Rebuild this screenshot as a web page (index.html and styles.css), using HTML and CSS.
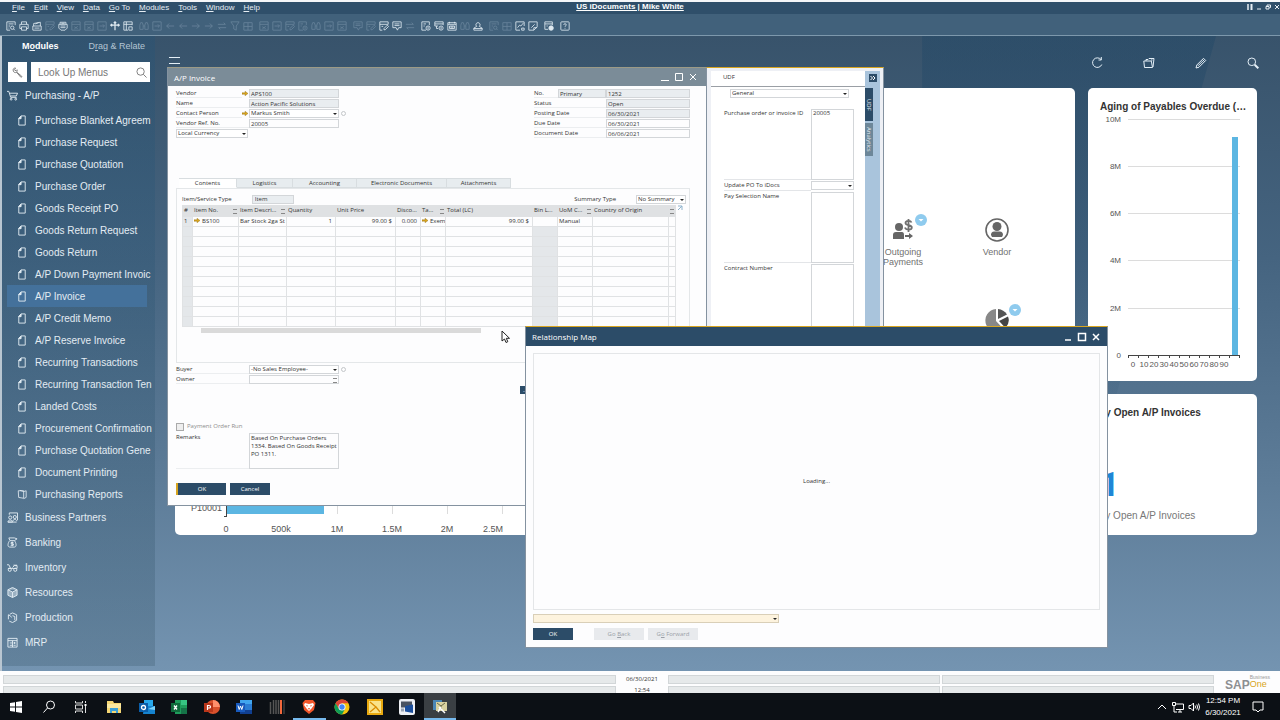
FILE: index.html
```html
<!DOCTYPE html>
<html lang="en">
<head>
  <meta charset="utf-8">
  <title>US iDocuments | Mike White</title>
  <link rel="stylesheet" href="styles.css">
</head>
<body>

<svg class="sprite" aria-hidden="true">
  <symbol id="i-preview" viewBox="0 0 12 12"><path d="M11 5V1H1v10h4M3 3.500h6M3 6h2M3 8.500h1M10.500 11L9 9.500"/><circle cx="7.500" cy="8" r="2"/></symbol>
  <symbol id="i-print" viewBox="0 0 12 12"><path d="M3 4V1h6v3M3 9H1V4h10v5H9M3 7h6v4H3z"/></symbol>
  <symbol id="i-printer2" viewBox="0 0 12 12"><path d="M2 6V3l8-1.500V6M1 6h10v5H1zM4 3.500L8 2M3 8.500h6"/></symbol>
  <symbol id="i-sheet" viewBox="0 0 12 12"><path d="M1 1h10v10H1zM1 4h10M4 7l4 2M8 6.500L4 9.500"/></symbol>
  <symbol id="i-arrowbox" viewBox="0 0 12 12"><path d="M1 1h10v10H1zM3 6h6M7 4l2 2-2 2"/></symbol>
  <symbol id="i-fax" viewBox="0 0 12 12"><path d="M2.500 4V1.500h7V4M1 4h10v4.500L8.500 11h-5L1 8.500zM3 6h6M3 8h6M4 2.800h4"/></symbol>
  <symbol id="i-move" viewBox="0 0 12 12"><path d="M6 1v10M1 5h10M4.500 2.500L6 1l1.500 1.500M2.500 3.500L1 5l1.500 1.500M9.500 3.500L11 5 9.500 6.500" stroke-width="1.500"/></symbol>
  <symbol id="i-layout" viewBox="0 0 12 12"><path d="M11 5V1H1v10h5M1 4h10M4 1v10M7 7h4v4H7z"/></symbol>
  <symbol id="i-find" viewBox="0 0 12 12"><path d="M1 10V5l1-3h2l1 3v5zM7 10V5l1-3h2l1 3v5zM5 6h2"/></symbol>
  <symbol id="i-left" viewBox="0 0 12 12"><path d="M11 6H2M5 3L2 6l3 3"/></symbol>
  <symbol id="i-right" viewBox="0 0 12 12"><path d="M1 6h9M7 3l3 3-3 3"/></symbol>
  <symbol id="i-swap" viewBox="0 0 12 12"><path d="M1 4h9M8 2l2 2M11 8H2M4 10L2 8"/></symbol>
  <symbol id="i-filter" viewBox="0 0 12 12"><path d="M1 1h10L7.500 6v5l-3-1.500V6z"/></symbol>
  <symbol id="i-grid" viewBox="0 0 12 12"><path d="M1 2h10v9H1zM6 2v9M1 6.500h10"/></symbol>
  <symbol id="i-edit" viewBox="0 0 12 12"><path d="M11 4V1H1v10h3M1 4h10M6 10.500V9l4-4 1.500 1.500-4 4zM3 6.500h2"/></symbol>
  <symbol id="i-chat" viewBox="0 0 12 12"><path d="M1 1h10v7H8l-1.500 3L5 8H1zM3 3.500h6M3 5.500h6"/></symbol>
  <symbol id="i-doccoin" viewBox="0 0 12 12"><path d="M6 11H1V1h9v4M3 3.500h3M3 6h1.500"/><circle cx="8.500" cy="8.500" r="2.500"/><path d="M8.500 7v3"/></symbol>
  <symbol id="i-alert" viewBox="0 0 12 12"><path d="M5 6H1V1h10v4M1 3.500h10M3 6v3h2"/><circle cx="8.500" cy="8.500" r="2.500"/><path d="M8.500 7v3"/></symbol>
  <symbol id="i-calendar" viewBox="0 0 12 12"><path d="M1 2h10v9H1zM1 4h10M3 1v2M9 1v2M3 6h6v3H3zM5 6v3M7 6v3"/></symbol>
  <symbol id="i-stamp" viewBox="0 0 12 12"><path d="M4.500 6.500a2.500 2.500 0 1 1 3 0L11 8.500V11H1V8.500zM1 9h10"/></symbol>
  <symbol id="i-chart" viewBox="0 0 12 12"><path d="M11 6V1H1v10h5M3 8l2.500-3L7 6l3-3.500M8 8.500h3v2.500H8z"/></symbol>
  <symbol id="i-note" viewBox="0 0 12 12"><path d="M1 1h10v6l-4 4H1zM7 11V8h4M4 8l4-4"/></symbol>
  <symbol id="i-web" viewBox="0 0 12 12"><path d="M5 10H1V1h9v4M1 3.500h9M3 6h1.500"/><circle cx="8.500" cy="8.500" r="2.700" fill="currentColor"/></symbol>
  <symbol id="i-help" viewBox="0 0 12 12"><rect x="1" y="1" width="10" height="10" rx="1"/><path d="M4.500 4.700c0-2 3-2 3 0C7.500 5.800 6 5.700 6 7M6 8.200v1"/></symbol>
  <symbol id="i-doc" viewBox="0 0 10 12"><path d="M1.500 3.500L4 1h4.500v10h-7z"/><path d="M1.500 4L4 1v3z" fill="currentColor"/></symbol>
  <symbol id="i-report" viewBox="0 0 12 12"><path d="M1.500 1.500H8v9L2 9.500zM3.500 1L8 2.500M8 2.500l3-1v8l-3 1.500"/></symbol>
  <symbol id="i-search" viewBox="0 0 12 12"><circle cx="5" cy="5" r="4"/><path d="M8 8l3.500 3.500"/></symbol>
  <symbol id="i-arrow" viewBox="0 0 8 6"><path d="M0 2h4V0l4 3-4 3V4H0z"/></symbol>
  <symbol id="i-badge" viewBox="0 0 12 12"><circle cx="6" cy="6" r="6" fill="#8fcbee"/><path d="M3.500 5h5L6 7.500z" fill="#fff"/></symbol>
</svg>

<div class="app">
  <header class="menubar">
    <nav class="menus">
      <a href="#"><u>F</u>ile</a>
      <a href="#"><u>E</u>dit</a>
      <a href="#"><u>V</u>iew</a>
      <a href="#"><u>D</u>ata</a>
      <a href="#"><u>G</u>o To</a>
      <a href="#"><u>M</u>odules</a>
      <a href="#"><u>T</u>ools</a>
      <a href="#"><u>W</u>indow</a>
      <a href="#"><u>H</u>elp</a>
    </nav>
    <h1>US iDocuments | Mike White</h1>
    <div class="app-controls">
      <button aria-label="Layout"><svg viewBox="0 0 6 6"><path d="M1 0v6M0 1h2M0 3h2M0 5h2M3 1h3M3 3h3M3 5h3M4.500 0v6"/></svg></button>
      <button aria-label="Minimize"><svg viewBox="0 0 6 6"><path d="M1 5h4"/></svg></button>
      <button aria-label="Restore"><svg viewBox="0 0 6 6"><path d="M2 2V1h3.500v2.500h-1M1 2.500h3v2.500H1z"/></svg></button>
      <button aria-label="Close"><svg viewBox="0 0 6 6"><path d="M1 1l4 4M5 1L1 5"/></svg></button>
    </div>
  </header>

  <div class="toolbar">
    <div class="tools">
      <button aria-label="Preview"><svg><use href="#i-preview"/></svg></button>
      <button aria-label="Print"><svg><use href="#i-print"/></svg></button>
      <button aria-label="Send"><svg><use href="#i-printer2"/></svg></button>
      <button aria-label="SMS" disabled><svg><use href="#i-edit"/></svg></button>
      <button aria-label="Fax"><svg><use href="#i-fax"/></svg></button>
      <button aria-label="Excel" disabled><svg><use href="#i-sheet"/></svg></button>
      <button aria-label="Word" disabled><svg><use href="#i-sheet"/></svg></button>
      <button aria-label="PDF" disabled><svg><use href="#i-arrowbox"/></svg></button>
      <button aria-label="Launch"><svg><use href="#i-move"/></svg></button>
      <button aria-label="Lock screen"><svg><use href="#i-layout"/></svg></button>
    </div>
    <div class="tools">
      <button aria-label="Find" disabled><svg><use href="#i-find"/></svg></button>
      <button aria-label="Add" disabled><svg><use href="#i-arrowbox"/></svg></button>
      <button aria-label="First" disabled><svg><use href="#i-left"/></svg></button>
      <button aria-label="Previous" disabled><svg><use href="#i-left"/></svg></button>
      <button aria-label="Next" disabled><svg><use href="#i-right"/></svg></button>
      <button aria-label="Last" disabled><svg><use href="#i-right"/></svg></button>
      <button aria-label="Refresh" disabled><svg><use href="#i-swap"/></svg></button>
      <button aria-label="Filter" disabled><svg><use href="#i-filter"/></svg></button>
      <button aria-label="Sort" disabled><svg><use href="#i-grid"/></svg></button>
    </div>
    <div class="tools">
      <button aria-label="Base document" disabled><svg><use href="#i-sheet"/></svg></button>
      <button aria-label="Target document" disabled><svg><use href="#i-arrowbox"/></svg></button>
      <button aria-label="Gross profit" disabled><svg><use href="#i-edit"/></svg></button>
      <button aria-label="Payment means" disabled><svg><use href="#i-doccoin"/></svg></button>
      <button aria-label="Volume" disabled><svg><use href="#i-find"/></svg></button>
      <button aria-label="Transaction" disabled><svg><use href="#i-arrowbox"/></svg></button>
      <button aria-label="Journal" disabled><svg><use href="#i-sheet"/></svg></button>
    </div>
    <div class="tools">
      <button aria-label="Chart" disabled><svg><use href="#i-chat"/></svg></button>
      <button aria-label="Layout designer" disabled><svg><use href="#i-edit"/></svg></button>
      <button aria-label="Edit form"><svg><use href="#i-edit"/></svg></button>
      <button aria-label="Messages"><svg><use href="#i-chat"/></svg></button>
      <button aria-label="Transfer" disabled><svg><use href="#i-swap"/></svg></button>
    </div>
    <div class="tools">
      <button aria-label="Query"><svg><use href="#i-doccoin"/></svg></button>
      <button aria-label="Alerts"><svg><use href="#i-alert"/></svg></button>
      <button aria-label="Calendar"><svg><use href="#i-calendar"/></svg></button>
      <button aria-label="Partners" disabled><svg><use href="#i-find"/></svg></button>
      <button aria-label="User"><svg><use href="#i-stamp"/></svg></button>
    </div>
    <div class="tools">
      <button aria-label="Search report" disabled><svg><use href="#i-preview"/></svg></button>
      <button aria-label="Table" disabled><svg><use href="#i-grid"/></svg></button>
      <button aria-label="Analytics"><svg><use href="#i-chart"/></svg></button>
      <button aria-label="Note"><svg><use href="#i-note"/></svg></button>
    </div>
    <div class="tools">
      <button aria-label="Web"><svg><use href="#i-web"/></svg></button>
    </div>
    <div class="tools">
      <button aria-label="Help"><svg><use href="#i-help"/></svg></button>
    </div>
  </div>

  <main class="workspace">
    <aside class="sidebar">
      <div class="side-tabs">
        <button class="active">M<u>o</u>dules</button>
        <button>D<u>r</u>ag &amp; Relate</button>
      </div>
      <div class="side-search">
        <button aria-label="Settings"><svg viewBox="0 0 12 12"><path d="M1.500 4.500C.500 2.500 2 .800 4 1.200L2.800 2.500l.400 1.200 1.300.300L5.500 3c.500 1.200.300 2-.500 2.500l5.500 4.500c.600.800-.300 1.600-1 1L5 5.800C3.500 6.500 2 6 1.500 4.500z"/></svg></button>
        <label class="lookup">
          <input type="text" placeholder="Look Up Menus" aria-label="Look Up Menus">
          <svg><use href="#i-search"/></svg>
        </label>
      </div>
      <a class="module open" href="#"><svg viewBox="0 0 12 12"><path d="M0 1.500h2L4 8h6.500M3 3.500h8.500l-1.300 3H4"/><circle cx="4.500" cy="10" r="1"/><circle cx="9.500" cy="10" r="1"/></svg>Purchasing - A/P</a>
      <ul class="menu-list">
        <li><a href="#"><svg><use href="#i-doc"/></svg><span>Purchase Blanket Agreem</span></a></li>
        <li><a href="#"><svg><use href="#i-doc"/></svg><span>Purchase Request</span></a></li>
        <li><a href="#"><svg><use href="#i-doc"/></svg><span>Purchase Quotation</span></a></li>
        <li><a href="#"><svg><use href="#i-doc"/></svg><span>Purchase Order</span></a></li>
        <li><a href="#"><svg><use href="#i-doc"/></svg><span>Goods Receipt PO</span></a></li>
        <li><a href="#"><svg><use href="#i-doc"/></svg><span>Goods Return Request</span></a></li>
        <li><a href="#"><svg><use href="#i-doc"/></svg><span>Goods Return</span></a></li>
        <li><a href="#"><svg><use href="#i-doc"/></svg><span>A/P Down Payment Invoic</span></a></li>
        <li class="selected"><a href="#"><svg><use href="#i-doc"/></svg><span>A/P Invoice</span></a></li>
        <li><a href="#"><svg><use href="#i-doc"/></svg><span>A/P Credit Memo</span></a></li>
        <li><a href="#"><svg><use href="#i-doc"/></svg><span>A/P Reserve Invoice</span></a></li>
        <li><a href="#"><svg><use href="#i-doc"/></svg><span>Recurring Transactions</span></a></li>
        <li><a href="#"><svg><use href="#i-doc"/></svg><span>Recurring Transaction Ten</span></a></li>
        <li><a href="#"><svg><use href="#i-doc"/></svg><span>Landed Costs</span></a></li>
        <li><a href="#"><svg><use href="#i-doc"/></svg><span>Procurement Confirmation</span></a></li>
        <li><a href="#"><svg><use href="#i-doc"/></svg><span>Purchase Quotation Gene</span></a></li>
        <li><a href="#"><svg><use href="#i-doc"/></svg><span>Document Printing</span></a></li>
        <li><a href="#"><svg><use href="#i-report"/></svg><span>Purchasing Reports</span></a></li>
      </ul>
      <a class="module" href="#"><svg viewBox="0 0 12 12"><path d="M2.500 1h9v8M1 11c0-3 5-3 5 0zM6.500 10c0-2.500 4-2.500 4 0M1 11h9.500M2.500 1v2"/><circle cx="3.500" cy="6" r="1.700"/><circle cx="8.500" cy="5.500" r="1.700"/></svg>Business Partners</a>
      <a class="module" href="#"><svg viewBox="0 0 12 12"><path d="M3 3.500L2 1h6l3 1-3 2M3 4h5c2 2 3 7 0 7H3C0 11 1 6 3 4zM7 6H4.500v1.500H7V9H4M5.700 5v5"/></svg>Banking</a>
      <a class="module" href="#"><svg viewBox="0 0 12 12"><path d="M0 3h2l2 4h7V4H8L6 6M1 7h3M7 3.500h4"/><circle cx="3" cy="8.500" r="1.700"/><circle cx="9" cy="8.500" r="1.700"/></svg>Inventory</a>
      <a class="module" href="#"><svg viewBox="0 0 12 12"><path d="M6 .500L11 3v6l-5 2.500L1 9V3zM1 3l5 2.500L11 3M6 5.500v6" fill="#dce8f0" fill-opacity=".5"/></svg>Resources</a>
      <a class="module" href="#"><svg viewBox="0 0 12 12"><path d="M1.500 8V3L4 4.500 5 6M3 2.500L6 1l4.500 2v6L6 11.500 2.500 10M6 4l2.500 1v4"/></svg>Production</a>
      <a class="module" href="#"><svg viewBox="0 0 12 12"><path d="M1 1.500h10v9.500H1zM1 4h10M3 6.500h2.500M3 9h2.500M7 6.500h2.500M7 9h2.500M6 4v7M8.200 5.500v2"/></svg>MRP</a>
    </aside>

    <section class="dashboard">
      <div class="dash-head">
        <button class="burger" aria-label="Menu"></button>
        <button aria-label="Refresh"><svg viewBox="0 0 12 12"><path d="M10 2.500A4.800 4.800 0 1 0 10.800 7.500M10.300 0v3H7.500"/></svg></button>
        <button aria-label="Open"><svg viewBox="0 0 12 12"><path d="M1.500 10.500L.800 4h7.500l1.200 6.500zM3 4V2.500h2L6 1.500h5L10 10M8 3h1.500"/></svg></button>
        <button aria-label="Edit"><svg viewBox="0 0 12 12"><path d="M1 11l.800-3L8.500 1.300l2.200 2.200L4 10.200zM7.500 2.500l2 2M3 8.800L8 3.800"/></svg></button>
        <button aria-label="Search"><svg viewBox="0 0 12 12"><circle cx="4.800" cy="4.800" r="3.800"/><path d="M7.700 7.700l3.600 3.600" stroke-width="2"/></svg></button>
      </div>
      <div class="cards">
        <article class="card processes">
          <a class="tile" href="#">
            <svg class="tile-icon" viewBox="0 0 26 26"><circle cx="9" cy="10" r="4"/><path d="M3 22v-4q0-3 3-3h6q2 0 2 3v4zM15 18h4v-2l4 3-4 3v-2h-4z"/><path d="M21.500 5.500c-1-2.500-6-2-6 .500 0 3 6.300 1.500 6.300 4.500 0 2.800-5.800 3-6.800 0M18.500 2v13" fill="none" stroke="#707070" stroke-width="1.800"/></svg>
            <svg class="badge"><use href="#i-badge"/></svg>
            Outgoing Payments
          </a>
          <a class="tile" href="#">
            <svg class="tile-icon" viewBox="0 0 26 26"><circle cx="13" cy="13" r="11" fill="none" stroke="#666" stroke-width="1.600"/><circle cx="13" cy="9.500" r="4.500"/><path d="M7 18q0-4 4-3.500h4q4-.500 4 3.500l-1 2H8z"/></svg>
            Vendor
          </a>
          <a class="tile tile-right" href="#" aria-label="Reports">
            <svg class="tile-icon" viewBox="0 0 26 26"><path d="M12 14V2a11.500 11.500 0 1 0 8 20.500z" fill="#888"/><path d="M14 12V2a12 12 0 0 1 9 5.500z" fill="#555"/><path d="M15 14l9-4.500a11 11 0 0 1-2.500 11.500z" fill="#444"/></svg>
            <svg class="badge"><use href="#i-badge"/></svg>
          </a>
        </article>

        <article class="card aging">
          <h2>Aging of Payables Overdue (…</h2>
          <svg class="chart" viewBox="0 0 145 258" width="145" height="258">
            <path class="gridline" d="M28 6.500h112M28 53.500h112M28 100.500h112M28 147.500h112M28 195.500h112"/>
            <rect class="bar" x="132" y="24" width="6" height="218"/>
            <path class="axis" d="M28 242.500h112M28.500 242v3M38.500 242v3M48.500 242v3M58.500 242v3M69.500 242v3M79.500 242v3M89.500 242v3M99.500 242v3M109.500 242v3M119.500 242v3M129.500 242v3M139.500 242v3"/>
            <g text-anchor="end">
              <text x="21" y="9">10M</text><text x="21" y="56">8M</text><text x="21" y="103">6M</text>
              <text x="21" y="150">4M</text><text x="21" y="198">2M</text><text x="21" y="245">0</text>
            </g>
            <g text-anchor="middle">
              <text x="33" y="254">0</text><text x="44" y="254">10</text><text x="54" y="254">20</text><text x="64" y="254">30</text><text x="74" y="254">40</text>
              <text x="84" y="254">50</text><text x="94" y="254">60</text><text x="104" y="254">70</text><text x="114" y="254">80</text><text x="124" y="254">90</text>
            </g>
          </svg>
        </article>

        <article class="card vendors">
          <svg class="chart" viewBox="0 0 340 48" width="340" height="48">
            <path class="gridline" d="M106.500 0v27M162.500 0v27M217.500 0v27M272.500 0v27M327.500 0v27"/>
            <rect class="bar" x="51" y="0" width="98" height="27"/>
            <path class="axis" d="M51.500 0v30M49 29.500h3"/>
            <text class="cat" x="47" y="24" text-anchor="end">P10001</text>
            <g text-anchor="middle">
              <text x="51" y="45">0</text><text x="106" y="45">500k</text><text x="162" y="45">1M</text>
              <text x="217" y="45">1.5M</text><text x="272" y="45">2M</text><text x="318" y="45">2.5M</text>
            </g>
          </svg>
        </article>

        <article class="card count">
          <h2>My Open A/P Invoices</h2>
          <strong>1</strong>
          <p>My Open A/P Invoices</p>
        </article>
      </div>
    </section>

    <section class="window invoice">
      <div class="titlebar">
        <h2>A/P Invoice</h2>
        <button aria-label="Minimize"><svg viewBox="0 0 10 10"><path d="M1 8.500h8"/></svg></button>
        <button aria-label="Maximize"><svg viewBox="0 0 10 10"><path d="M1.500 1.500h7v7h-7z"/></svg></button>
        <button aria-label="Close"><svg viewBox="0 0 10 10"><path d="M2 2l6 6M8 2L2 8"/></svg></button>
      </div>
      <div class="invoice-body">
        <div class="form-head">
          <div class="fields">
            <label class="field"><span>Vendor</span><svg class="link"><use href="#i-arrow"/></svg><input class="locked" value="APS100"></label>
            <label class="field"><span>Name</span><input class="locked" value="Action Pacific Solutions"></label>
            <label class="field"><span>Contact Person</span><svg class="link"><use href="#i-arrow"/></svg><span class="select"><select><option>Markus Smith</option></select></span><i class="info"></i></label>
            <label class="field"><span>Vendor Ref. No.</span><input value="20005"></label>
            <span class="select currency"><select aria-label="Currency"><option>Local Currency</option></select></span>
          </div>
          <div class="fields numbers">
            <label class="field"><span>No.</span><input class="locked series" value="Primary" aria-label="Series"><input class="locked" value="1252"></label>
            <label class="field"><span>Status</span><input class="locked" value="Open"></label>
            <label class="field"><span>Posting Date</span><input class="locked" value="06/30/2021"></label>
            <label class="field"><span>Due Date</span><input value="06/30/2021"></label>
            <label class="field"><span>Document Date</span><input value="06/06/2021"></label>
          </div>
        </div>

        <div class="tabs">
          <button class="active">Contents</button>
          <button>Logistics</button>
          <button class="mid">Accounting</button>
          <button class="wide">Electronic Documents</button>
          <button class="mid">Attachments</button>
        </div>
        <div class="panel">
          <div class="panel-head">
            <label>Item/Service Type <input class="locked" value="Item"></label>
            <label>Summary Type <span class="select"><select><option>No Summary</option></select></span></label>
          </div>
          <div class="grid-wrap">
            <table>
              <colgroup>
                <col class="c-no"><col class="c-item"><col class="c-desc"><col class="c-qty"><col class="c-price"><col class="c-small">
                <col class="c-small"><col class="c-total"><col class="c-small"><col class="c-uom"><col class="c-origin"><col>
              </colgroup>
              <thead>
                <tr><th>#</th><th class="m">Item No.</th><th class="m">Item Descri...</th><th>Quantity</th><th>Unit Price</th><th>Disco...</th><th class="m">Ta...</th><th>Total (LC)</th><th>Bin L...</th><th class="m">UoM C...</th><th>Country of Origin</th><th class="m"></th></tr>
              </thead>
              <tbody>
                <tr><td>1</td><td><svg class="link"><use href="#i-arrow"/></svg>BS100</td><td>Bar Stock 2ga St</td><td class="num">1</td><td class="num">99.00 $</td><td class="num">0.000</td><td><svg class="link"><use href="#i-arrow"/></svg>Exem</td><td class="num">99.00 $</td><td></td><td>Manual</td><td></td><td></td></tr>
                <tr><td></td><td></td><td></td><td></td><td></td><td></td><td></td><td></td><td></td><td></td><td></td><td></td></tr>
                <tr><td></td><td></td><td></td><td></td><td></td><td></td><td></td><td></td><td></td><td></td><td></td><td></td></tr>
                <tr><td></td><td></td><td></td><td></td><td></td><td></td><td></td><td></td><td></td><td></td><td></td><td></td></tr>
                <tr><td></td><td></td><td></td><td></td><td></td><td></td><td></td><td></td><td></td><td></td><td></td><td></td></tr>
                <tr><td></td><td></td><td></td><td></td><td></td><td></td><td></td><td></td><td></td><td></td><td></td><td></td></tr>
                <tr><td></td><td></td><td></td><td></td><td></td><td></td><td></td><td></td><td></td><td></td><td></td><td></td></tr>
                <tr><td></td><td></td><td></td><td></td><td></td><td></td><td></td><td></td><td></td><td></td><td></td><td></td></tr>
                <tr><td></td><td></td><td></td><td></td><td></td><td></td><td></td><td></td><td></td><td></td><td></td><td></td></tr>
                <tr><td></td><td></td><td></td><td></td><td></td><td></td><td></td><td></td><td></td><td></td><td></td><td></td></tr>
                <tr><td></td><td></td><td></td><td></td><td></td><td></td><td></td><td></td><td></td><td></td><td></td><td></td></tr>
              </tbody>
            </table>
            <svg class="expand" viewBox="0 0 6 6"><path d="M1 1h4v4M5 1L1 5"/></svg>
          </div>
          <div class="hscroll"></div>
        </div>

        <div class="fields">
          <label class="field"><span>Buyer</span><span class="select"><select><option>-No Sales Employee-</option></select></span><i class="info"></i></label>
          <label class="field owner"><span>Owner</span><input value=""></label>
        </div>
        <button class="btn more">...</button>
        <label class="check"><input type="checkbox" disabled> Payment Order Run</label>
        <label class="field remarks"><span>Remarks</span><textarea>Based On Purchase Orders 1334. Based On Goods Receipt PO 1311.</textarea></label>
        <div class="actions">
          <button class="btn default">OK</button>
          <button class="btn">Cancel</button>
        </div>
      </div>
    </section>

    <section class="window udf">
      <div class="udf-main">
        <h2>UDF</h2>
        <span class="select category"><select aria-label="Category"><option>General</option></select></span>
        <label class="udf-row tall"><span>Purchase order or invoice ID</span><textarea>20005</textarea></label>
        <label class="udf-row"><span>Update PO To iDocs</span><span class="select"><select><option></option></select></span></label>
        <label class="udf-row tall"><span>Pay Selection Name</span><textarea></textarea></label>
        <label class="udf-row tall"><span>Contract Number</span><textarea></textarea></label>
      </div>
      <div class="udf-side">
        <button class="collapse" aria-label="Collapse"><svg viewBox="0 0 8 8"><path d="M1.500 2l2 2-2 2M4 2l2 2-2 2"/></svg></button>
        <button class="vtab active">UDF</button>
        <button class="vtab">Analytics</button>
      </div>
    </section>

    <section class="window map">
      <div class="titlebar">
        <h2>Relationship Map</h2>
        <button aria-label="Minimize"><svg viewBox="0 0 10 10"><path d="M2 8h6"/></svg></button>
        <button aria-label="Maximize"><svg viewBox="0 0 10 10"><path d="M1.500 1.500h7v7h-7z"/></svg></button>
        <button aria-label="Close"><svg viewBox="0 0 10 10"><path d="M2 2l6 6M8 2L2 8"/></svg></button>
      </div>
      <div class="map-body">
        <div class="canvas">Loading...</div>
        <span class="select message"><select aria-label="Messages"><option></option></select></span>
        <div class="actions">
          <button class="btn">OK</button>
          <button class="btn" disabled>Go <u>B</u>ack</button>
          <button class="btn" disabled>G<u>o</u> Forward</button>
        </div>
      </div>
    </section>

    <svg class="cursor" viewBox="0 0 10 14"><path d="M1 1v10l2.500-2 1.500 3.500 1.800-.800L5.300 8.300H8.500z"/></svg>
  </main>

  <footer class="statusbar">
    <div class="cells">
      <span></span><time>06/30/2021</time><span></span><span></span>
      <span></span><time>12:54</time><span></span><span></span>
    </div>
    <div class="sap"><b>SAP</b><span><small>Business</small>One</span></div>
  </footer>

  <footer class="taskbar">
    <div class="task-icons">
      <button aria-label="Start"><svg viewBox="0 0 16 16"><path d="M2 4l5-.800v4.300H2zM8 3l6-1v5.500H8zM2 8.500h5v4.300L2 12zM8 8.500h6V14l-6-1z" fill="#fff"/></svg></button>
      <button aria-label="Search"><svg viewBox="0 0 16 16"><circle cx="9.500" cy="6" r="4" fill="none" stroke="#fff"/><path d="M6.500 9L2.500 13.500" stroke="#fff"/></svg></button>
      <button aria-label="Task view"><svg viewBox="0 0 16 16"><path d="M2.500 2v2h7V2M2.500 14v-2h7v2M2.500 6h7v4h-7zM12.500 2v2M12.500 7v7" fill="none" stroke="#ddd"/><path d="M11.500 5h2v2h-2z" fill="#fff"/></svg></button>
      <button aria-label="Explorer"><svg viewBox="0 0 16 16"><path d="M1 2h6l1 2h7v10H1z" fill="#f5d673"/><path d="M1 5h14v4H1z" fill="#fbe8a0"/><path d="M4 14V9h8v5h-2v-2H6v2z" fill="#3ba0d8"/></svg></button>
      <button aria-label="Outlook"><svg viewBox="0 0 16 16"><path d="M5 1h9v7H5z" fill="#28a8ea"/><path d="M5 7h11v8H4z" fill="#1583ce"/><path d="M9 10l7-3v4z" fill="#7cd3fa"/><path d="M0 4h9v9H0z" fill="#0a5da8"/><circle cx="4.500" cy="8.500" r="2" fill="none" stroke="#fff" stroke-width="1.300"/></svg></button>
      <button aria-label="Excel"><svg viewBox="0 0 16 16"><path d="M4 1h12v14H4z" fill="#1f9c5b"/><path d="M10 1h6v5h-6z" fill="#37c482"/><path d="M10 9h6v6h-6z" fill="#157347"/><path d="M0 4h9v9H0z" fill="#0f6b3b"/><path d="M3 6.500l3 4M6 6.500l-3 4" stroke="#fff" stroke-width="1.300"/></svg></button>
      <button aria-label="PowerPoint"><svg viewBox="0 0 16 16"><circle cx="9" cy="8" r="7" fill="#d9512c"/><path d="M9 1a7 7 0 0 1 7 7H9z" fill="#ff8f6b"/><path d="M0 4h9v9H0z" fill="#b9361a"/><path d="M3.500 11V6.500H5q1.500 0 1.500 1.300T5 9H3.500" fill="none" stroke="#fff" stroke-width="1.200"/></svg></button>
      <button aria-label="Word"><svg viewBox="0 0 16 16"><path d="M4 1h12v14H4z" fill="#2b7cd3"/><path d="M4 1h12v4H4z" fill="#41a5ee"/><path d="M4 11h12v4H4z" fill="#103f91"/><path d="M0 4h9v9H0z" fill="#185abd"/><path d="M2 6.500l1.200 4L4.500 7l1.300 3.500L7 6.500" fill="none" stroke="#fff"/></svg></button>
      <button aria-label="Barcode"><svg viewBox="0 0 16 16"><path d="M1.500 3v12M4.500 1v14M7 1v14M9.500 1v14" stroke="#555" stroke-width="1.500"/><path d="M12 1v14" stroke="#f2683c" stroke-width="2"/><path d="M15 1v14" stroke="#555"/></svg></button>
      <button class="running" aria-label="Brave"><svg viewBox="0 0 16 16"><path d="M4 1h8l2.500 3-1.500 7-5 4-5-4L1.500 4z" fill="#f1562b"/><path d="M4 4l4 1 4-1 1 2-2.500 3.500L8 12 5.500 9.500 3 6z" fill="#fff"/><path d="M5 6l2 .800-1 1zM11 6l-2 .800 1 1zM7 9h2l-1 2z" fill="#f1562b"/></svg></button>
      <button aria-label="Chrome"><svg viewBox="0 0 16 16"><circle cx="8" cy="8" r="7.500" fill="#f4c20d"/><path d="M1.500 4.300A7.500 7.500 0 0 1 14.500 4.300H8L5 10z" fill="#db4437"/><path d="M1.500 4.300A7.500 7.500 0 0 0 8 15.500L11 10H5z" fill="#0f9d58"/><circle cx="8" cy="8" r="3.500" fill="#fff"/><circle cx="8" cy="8" r="2.700" fill="#4285f4"/></svg></button>
      <button aria-label="Notes"><svg viewBox="0 0 16 16"><path d="M0 0h16v16H0z" fill="#e9a90f"/><path d="M2 2h12v12H2z" fill="#f9e38a"/><path d="M3 3l6 5-6 5M9 8l4 5" fill="none" stroke="#d98c00" stroke-width="1.300"/></svg></button>
      <button aria-label="Remote desktop"><svg viewBox="0 0 16 16"><rect width="16" height="16" rx="2" fill="#eef0f4"/><path d="M2 2.500h11v6H2z" fill="#4a5361"/><path d="M6 7l8-1.500V14l-8-1.500z" fill="#1c4f9c"/><path d="M2 9.500h3v3H2z" fill="#9aa5b4"/></svg></button>
      <button class="running current" aria-label="SAP Business One"><svg viewBox="0 0 16 16"><path d="M1 1h9v10H1z" fill="#4b86b5"/><path d="M4 3h11v9H4z" fill="#d9d2a0"/><path d="M5 4l4 3 4-3M9 7v4" fill="none" stroke="#6b6a4a"/><path d="M7 8l6 6M9 8l-3 5" stroke="#fff" stroke-width="1.500"/></svg></button>
    </div>
    <div class="tray">
      <svg viewBox="0 0 12 12"><path d="M2 8l4-4 4 4"/></svg>
      <svg viewBox="0 0 12 12"><path d="M4 3h7.500v5.500H4M6 11h4M8 8.500V11M.500 1.500h3v3h-3zM2 4.500V11h3"/></svg>
      <svg viewBox="0 0 12 12"><path d="M1 4.500h2L5.500 2v8L3 7.500H1zM7 4.500q1 1.500 0 3M8.800 3.500q1.500 2.500 0 5M10.500 2.500q2 3.500 0 7"/></svg>
      <time>12:54 PM<br>6/30/2021</time>
      <svg class="notice" viewBox="0 0 12 12"><path d="M1 1h10v8H8L6 11 4 9H1z"/></svg>
    </div>
  </footer>
</div>

</body>
</html>
```
FILE: styles.css
```css
* {
  margin: 0;
  padding: 0;
  box-sizing: border-box;
}

:root {
  --navy: #2c4c68;
  --line: #d3d6d9;
  --locked: #e9edf0;
  --gold: #d8a520;
  --ui: "Open Sans", "Noto Sans", sans-serif;
  --web: "Liberation Sans", Arial, sans-serif;
}

body {
  font-family: var(--web);
  font-size: 8px;
  color: #333;
  background: #0b0f14;
}

a {
  color: inherit;
  text-decoration: none;
}

button,
input,
select,
textarea {
  font: inherit;
  color: inherit;
  border: 0;
  border-radius: 0;
  background: none;
  outline: none;
}

select,
input[type="checkbox"] {
  appearance: none;
}

svg {
  fill: none;
  stroke: currentColor;
  flex: none;
}

.sprite {
  position: absolute;
  width: 0;
  height: 0;
}

.app {
  display: flex;
  flex-direction: column;
  min-height: 100vh;
  border-top: 2px solid #f4f6f8;
}

/* menu bar */
.menubar {
  display: grid;
  grid-template-columns: 1fr auto 1fr;
  align-items: center;
  height: 12px;
  padding: 0 0 2px 12px;
  background: #2f4f6a;
  color: #e6edf3;
}

.menus {
  display: flex;
  gap: 9px;
}

.menubar h1 {
  padding-right: 32px;
  font-size: 8px;
  line-height: 10px;
  text-decoration: underline;
  color: #fff;
}

.app-controls {
  display: flex;
  justify-content: flex-end;
  gap: 3px;
}

.app-controls button,
.app-controls svg {
  display: block;
  width: 6px;
  height: 6px;
}

/* toolbar */
.toolbar {
  display: flex;
  align-items: center;
  gap: 3px;
  height: 22px;
  padding: 2px 0 0 4px;
  background: #41617b;
  border-bottom: 1px solid #7d98ac;
}

.tools {
  display: flex;
}

.tools button {
  width: 13px;
  height: 12px;
  color: #dfe9f0;
}

.tools button:disabled {
  color: #67839a;
}

.tools svg {
  display: block;
  width: 10px;
  height: 10px;
  margin: 1px auto;
}

/* workspace */
.workspace {
  position: relative;
  display: flex;
  flex: 1;
  min-height: 635px;
  overflow: hidden;
  border-left: 2px solid #b9c6d1;
  background: linear-gradient(#38536b, #456480 35%, #5d7c98 70%, #7494b1);
}

/* darker slab in the wallpaper */
.workspace::before {
  content: "";
  position: absolute;
  top: 0;
  left: 72%;
  width: 23%;
  height: 100%;
  background: linear-gradient(rgba(30, 70, 102, .4), rgba(30, 70, 102, 0) 70%);
  clip-path: polygon(0 0, 100% 0, 40% 100%, 0 60%);
}

.sidebar {
  position: relative;
  width: 153px;
  margin-bottom: 5px;
  background: linear-gradient(rgba(36, 84, 120, .35), rgba(60, 90, 110, .3));
  color: #e3ecf3;
  font-size: 10px;
}

.side-tabs {
  display: flex;
  height: 19px;
  font-size: 9px;
  color: #b4c5d3;
}

.side-tabs button {
  flex: 1;
}

.side-tabs .active {
  color: #fff;
  font-weight: bold;
}

.side-search {
  display: flex;
  gap: 4px;
  padding: 7px 5px 0 6px;
  color: #777;
}

.side-search button {
  width: 19px;
  height: 20px;
  background: #fff;
}

.side-search svg {
  display: block;
  width: 11px;
  height: 11px;
  margin: auto;
}

.lookup {
  display: flex;
  flex: 1;
  align-items: center;
  min-width: 0;
  padding: 0 3px 0 7px;
  background: #fff;
}

.lookup input {
  flex: 1;
  min-width: 0;
}

.lookup input::placeholder {
  color: #777;
}

.module {
  display: flex;
  align-items: center;
  gap: 7px;
  height: 25px;
  padding-left: 5px;
}

.module svg {
  width: 11px;
  height: 11px;
}

.module.open {
  height: 27px;
}

.menu-list {
  list-style: none;
  padding: 0 8px 0 5px;
}

.menu-list a {
  display: flex;
  align-items: center;
  gap: 8px;
  height: 22px;
  padding-left: 10px;
}

.menu-list .selected {
  background: #44719b;
}

.menu-list svg {
  width: 10px;
  height: 11px;
}

.menu-list span {
  white-space: nowrap;
}

/* dashboard */
.dashboard {
  position: relative;
  flex: 1;
  padding: 0 23px 0 20px;
}

.dash-head {
  display: flex;
  align-items: center;
  justify-content: flex-end;
  gap: 40px;
  height: 52px;
  padding-top: 2px;
  margin-right: -2px;
  color: #e4eff7;
}

.dash-head button,
.dash-head svg {
  display: block;
  width: 12px;
  height: 12px;
}

.dash-head .burger {
  width: 11px;
  height: 7px;
  margin: 0 auto 6px -6px;
  border: solid #e4eff7;
  border-width: 1px 0;
}

.cards {
  display: grid;
  grid-template-columns: 1fr 169px;
  grid-template-rows: 293px 141px;
  gap: 13px;
}

.card {
  overflow: hidden;
  border-radius: 5px;
  background: #fff;
}

.card h2 {
  font-size: 10px;
  line-height: 13px;
  white-space: nowrap;
}

.processes {
  display: grid;
  grid-template-columns: 94px 94px;
  grid-auto-rows: 90px;
  justify-content: end;
  padding: 129px 31px 0 0;
}

.tile {
  position: relative;
  padding: 0 20px;
  text-align: center;
  font-size: 9px;
  line-height: 10px;
  color: #707070;
}

.tile-right {
  grid-column: 2;
}

.tile-icon {
  display: block;
  width: 26px;
  height: 26px;
  margin: 0 auto 4px;
  fill: #666;
  stroke: none;
}

.badge {
  position: absolute;
  top: -3px;
  left: 59px;
  width: 12px;
  height: 12px;
  stroke: none;
}

.aging {
  padding: 12px;
}

.chart {
  display: block;
  stroke: none;
  fill: #555;
}

.gridline {
  stroke: #dcdcdc;
}

.bar {
  fill: #5cb6e2;
}

.axis {
  stroke: #444;
}

.vendors {
  display: flex;
  align-items: flex-end;
}

.vendors .chart {
  font-size: 9px;
}

.count {
  padding: 12px 9px;
}

.count strong {
  display: block;
  margin: 48px 0 9px 3px;
  font-family: Roboto, sans-serif;
  font-size: 34px;
  line-height: 34px;
  color: #1f86d6;
}

.count p {
  font-size: 10px;
  line-height: 12px;
  color: #777;
}

/* windows */
.window {
  position: absolute;
  display: flex;
  flex-direction: column;
  background: #fdfdfe;
  border: 1px solid #8492a0;
  border-top-color: var(--gold);
  font-family: var(--ui);
  font-size: 6px;
  line-height: 9px;
}

.titlebar {
  display: flex;
  align-items: center;
  gap: 4px;
  height: 18px;
  padding: 0 6px;
  color: #fff;
}

.titlebar h2 {
  flex: 1;
  font-size: 8px;
  font-weight: normal;
}

.titlebar button,
.titlebar svg {
  display: block;
  width: 10px;
  height: 10px;
}

.select {
  position: relative;
  display: block;
}

.select select {
  display: block;
  width: 100%;
  height: 9px;
  padding-left: 1px;
  border: 1px solid var(--line);
  line-height: 7px;
  background: #fff;
}

.select::after {
  content: "";
  position: absolute;
  right: 2px;
  top: 4px;
  border: 2px solid transparent;
  border-top-color: #222;
  border-bottom: 0;
}

.locked {
  background: var(--locked);
}

.btn {
  height: 12px;
  background: var(--navy);
  color: #fff;
}

.btn:disabled {
  background: #e8eaed;
  color: #9a9fa8;
}

.link {
  width: 6px;
  height: 5px;
  fill: var(--gold);
  stroke: #8c6a10;
  stroke-width: .5px;
}

.invoice {
  top: 31px;
  left: 165px;
  width: 540px;
  border-top-color: #9c9a86;
}

.invoice .titlebar {
  padding-right: 8px;
  background: #7b8c98;
}

.invoice-body {
  position: relative;
  padding: 3px 16px 10px 8px;
}

.form-head {
  display: flex;
  justify-content: space-between;
  height: 89px;
}

.field {
  position: relative;
  display: flex;
  align-items: center;
  width: 163px;
  height: 9px;
  margin-bottom: 1px;
}

.field > span:first-child {
  flex: 1;
  align-self: stretch;
  border-bottom: 1px solid #eceef0;
  line-height: 8px;
}

.field > .link {
  margin-right: 1px;
}

.field > input,
.field > .select {
  width: 90px;
}

.field > input {
  height: 9px;
  padding-left: 1px;
  border: 1px solid var(--line);
  line-height: 7px;
}

.info {
  position: absolute;
  left: 165px;
  top: 2px;
  width: 5px;
  height: 5px;
  border: 1px solid #c3c6c9;
  border-radius: 50%;
}

.select.currency {
  width: 72px;
}

.numbers .field {
  width: 156px;
}

.numbers .field > input {
  width: 84px;
}

.numbers .field > .series {
  width: 48px;
}

.tabs {
  display: flex;
  margin-left: 3px;
}

.tabs button {
  width: 56px;
  height: 10px;
  background: #e7ecef;
  border: 1px solid #d8dde0;
  border-left: 0;
}

.tabs .mid {
  width: 64px;
}

.tabs .wide {
  width: 90px;
}

.tabs .active {
  width: 58px;
  background: #fff;
  border-bottom-color: #fff;
}

.panel {
  height: 175px;
  padding: 6px 0 0 5px;
  border: 1px solid #e4e7e9;
}

.panel-head {
  display: flex;
  justify-content: space-between;
  height: 10px;
  padding-right: 3px;
}

.panel-head label {
  display: flex;
  gap: 20px;
}

.panel-head input {
  width: 42px;
  height: 9px;
  padding-left: 2px;
  border: 1px solid var(--line);
}

.panel-head .select {
  width: 50px;
}

.grid-wrap {
  display: flex;
  gap: 1px;
}

.expand {
  width: 6px;
  height: 6px;
  color: #8fb3cc;
}

table {
  width: 494px;
  table-layout: fixed;
  border-collapse: collapse;
}

.c-no { width: 10px; }
.c-item { width: 46px; }
.c-desc { width: 48px; }
.c-qty { width: 49px; }
.c-price { width: 60px; }
.c-small { width: 25px; }
.c-total { width: 87px; }
.c-uom { width: 35px; }
.c-origin { width: 76px; }

th,
td {
  height: 10px;
  padding: 0 1px;
  line-height: 9px;
  font-weight: normal;
  text-align: left;
  white-space: nowrap;
  overflow: hidden;
  border: 1px solid #e0e2e4;
  border-top: 0;
}

th {
  position: relative;
  height: 11px;
  background: #dfe1e3;
  border-color: #dfe1e3;
}

th.m::after {
  content: "";
  position: absolute;
  right: 1px;
  top: 4px;
  width: 4px;
  height: 3px;
  border: solid #888;
  border-width: 1px 0;
}

td:first-child,
tr + tr td:nth-child(9) {
  background: #e4e7ea;
}

td .link {
  margin-right: 2px;
}

td.num {
  padding-right: 3px;
  text-align: right;
}

.hscroll {
  width: 280px;
  height: 5px;
  margin: 1px 0 0 19px;
  background: #dadada;
}

.invoice-body > .fields {
  margin-top: 2px;
}

.owner::after {
  content: "";
  position: absolute;
  right: 2px;
  top: 3px;
  width: 4px;
  height: 3px;
  border: solid #888;
  border-width: 1px 0;
}

.more {
  display: block;
  width: 46px;
  height: 8px;
  margin: 2px 0 0 344px;
  line-height: 6px;
  text-align: left;
  padding-left: 3px;
}

.check {
  display: flex;
  align-items: center;
  gap: 3px;
  margin: 28px 0 2px;
  color: #8d8d8d;
}

.check input {
  width: 8px;
  height: 8px;
  border: 1px solid #aaa;
  background: #eee;
}

.field.remarks {
  height: 36px;
}

.remarks textarea {
  width: 90px;
  height: 36px;
  padding: 0 1px;
  border: 1px solid var(--line);
  line-height: 8px;
  resize: none;
}

.actions {
  display: flex;
  gap: 4px;
}

.invoice .actions {
  margin-top: 14px;
}

.invoice .actions .btn {
  width: 40px;
}

.invoice .actions .default {
  width: 50px;
  border-left: 2px solid var(--gold);
}

/* user-defined fields */
.udf {
  top: 31px;
  left: 704px;
  width: 178px;
  height: 270px;
  flex-direction: row;
  padding: 3px 3px 0 4px;
  background: #eef0f5;
}

.udf-main {
  flex: 1;
  padding: 0 11px 0 13px;
  background: #fff;
}

.udf h2 {
  height: 16px;
  margin: 0 -11px 2px -13px;
  padding: 2px 0 0 12px;
  border-bottom: 1px solid #9a9fa5;
  font-size: 6px;
  font-weight: normal;
}

.select.category {
  width: 119px;
  margin: 0 0 11px 6px;
}

.udf-row {
  display: flex;
  margin-bottom: 1px;
}

.udf-row > span:first-child {
  flex: 1;
  border-bottom: 1px solid #e3e5e8;
}

.udf-row textarea,
.udf-row .select {
  width: 43px;
}

.udf-row textarea {
  height: 71px;
  padding: 0 1px;
  border: 1px solid var(--line);
  line-height: 7px;
  resize: none;
}

.udf-side {
  width: 15px;
  background: #a9c4dc;
}

.udf-side button {
  display: block;
}

.collapse {
  width: 8px;
  height: 8px;
  margin: 3px 0 6px 4px;
  background: var(--navy);
  color: #fff;
}

.collapse svg {
  display: block;
  width: 8px;
  height: 8px;
}

.vtab {
  width: 8px;
  height: 33px;
  margin-bottom: 2px;
  background: #6d8799;
  color: #e8eef3;
  writing-mode: vertical-rl;
  line-height: 8px;
}

.vtab.active {
  background: var(--navy);
}

/* relationship map */
.map {
  top: 290px;
  left: 523px;
  width: 583px;
}

.map .titlebar {
  height: 19px;
  background: var(--navy);
}

.map .titlebar svg {
  stroke-width: 1.5px;
}

.map-body {
  padding: 7px;
}

.canvas {
  display: flex;
  align-items: center;
  justify-content: center;
  height: 257px;
  border: 1px solid #e4e6e8;
}

.select.message {
  width: 246px;
  margin: 4px 0 5px;
}

.message select {
  background: #fdf3de;
  border-color: #d9cfb8;
}

.map .btn {
  width: 50px;
}

.map .btn:first-child {
  width: 40px;
  margin-right: 17px;
}

.cursor {
  position: absolute;
  top: 294px;
  left: 499px;
  width: 10px;
  height: 14px;
  fill: #fff;
  stroke: #222;
}

/* status bar */
.statusbar {
  display: flex;
  align-items: flex-start;
  height: 22px;
  padding: 4px 0 0 3px;
  overflow: hidden;
  background: #fdfdfe;
}

.cells {
  display: grid;
  grid-template-columns: 614fr 48px 273fr 272fr;
  gap: 2px;
  flex: 1;
}

.cells span {
  height: 9px;
  background: #e6e9ea;
  border: 1px solid #d2d6d8;
}

.cells time {
  height: 9px;
  font-family: var(--ui);
  font-size: 6px;
  line-height: 9px;
  text-align: center;
}

.sap {
  display: flex;
  width: 66px;
  padding-left: 11px;
  color: #8d8f92;
}

.sap b {
  font-size: 12px;
  line-height: 20px;
}

.sap span {
  font-size: 9px;
  line-height: 9px;
  color: var(--gold);
}

.sap small {
  display: block;
  font-size: 5px;
  line-height: 5px;
  color: #999;
}

/* taskbar */
.taskbar {
  display: flex;
  justify-content: space-between;
  height: 27px;
  background: #0c1015;
  color: #fff;
}

.task-icons {
  display: flex;
  width: 456px;
}

.task-icons button {
  flex: 1;
}

.task-icons svg {
  display: block;
  width: 16px;
  height: 16px;
  margin: 0 auto;
  stroke: none;
}

.task-icons .running {
  border-bottom: 2px solid #76b9ed;
  padding-top: 2px;
}

.task-icons .current {
  background: #3a3f43;
}

.tray {
  display: flex;
  align-items: center;
  gap: 4px;
  padding-right: 16px;
}

.tray svg {
  width: 12px;
  height: 12px;
}

.tray time {
  width: 38px;
  margin-right: 6px;
  text-align: center;
  line-height: 12px;
}
```
